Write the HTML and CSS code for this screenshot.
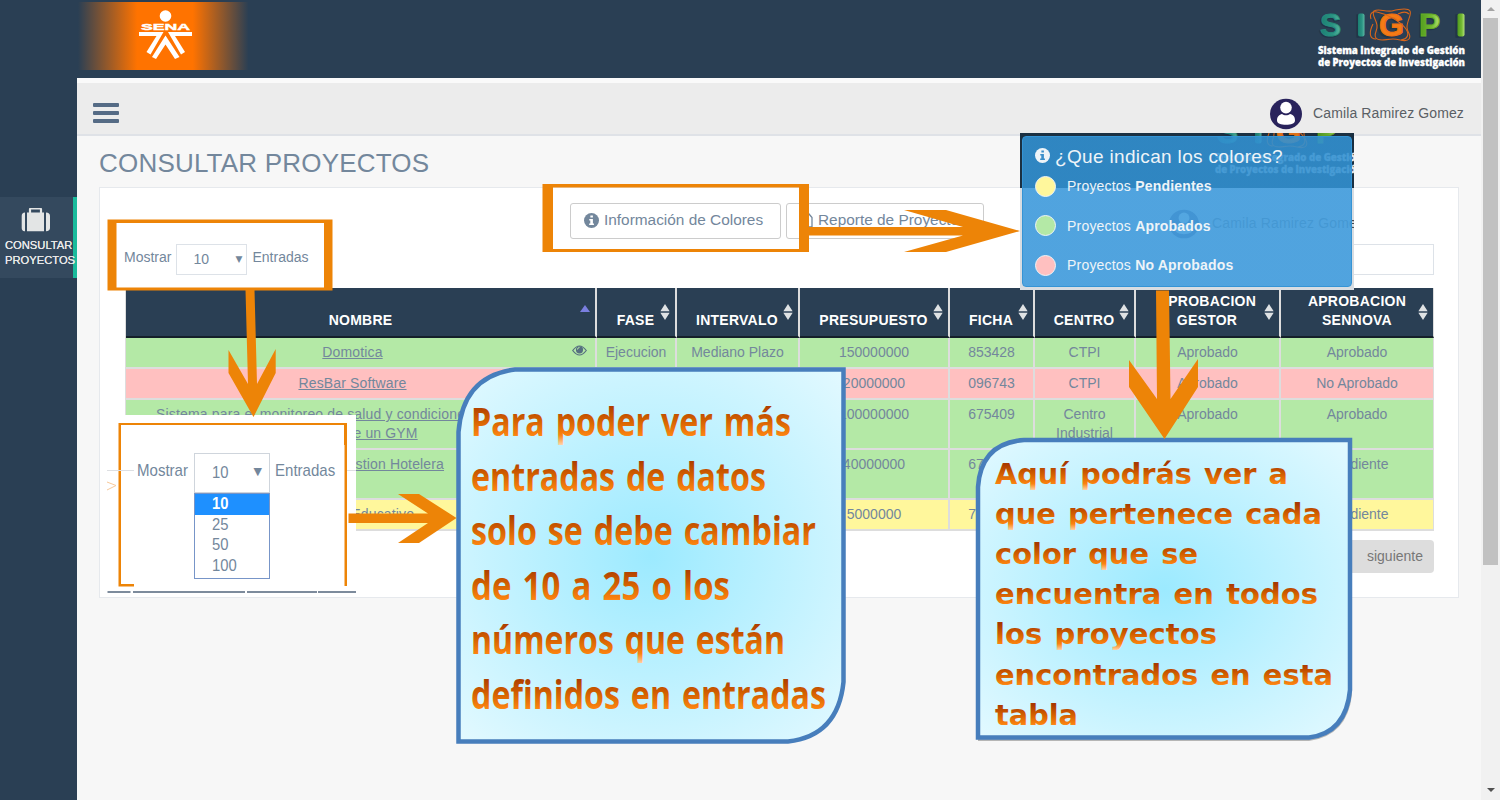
FILE: index.html
```html
<!DOCTYPE html>
<html lang="es">
<head>
<meta charset="utf-8">
<title>SIGPI - Consultar Proyectos</title>
<link rel="stylesheet" href="styles.css">
</head>
<body>
<svg class="defs" width="0" height="0" aria-hidden="true">
  <defs>
    <linearGradient id="teal" x1="0" x2="1" y1="0" y2="0"><stop offset="0" stop-color="#1b7f72"/><stop offset=".6" stop-color="#2a9483"/><stop offset="1" stop-color="#5db8a4"/></linearGradient>
    <linearGradient id="green" x1="0" x2="1" y1="0" y2="0"><stop offset="0" stop-color="#4f9a1c"/><stop offset=".6" stop-color="#74bb33"/><stop offset="1" stop-color="#b4e27a"/></linearGradient>
    <symbol id="info" viewBox="0 0 16 16"><circle cx="8" cy="8" r="8" fill="currentColor"/><path class="info-i" d="M6.800 2.600h2.700v2.300H6.800zM5.600 6.400h3.900v4.700h1.100v1.700H5.500v-1.700h1.200v-3H5.600z"/></symbol>
    <symbol id="person" viewBox="0 0 32 32"><ellipse cx="16" cy="16" rx="16" ry="15.300" fill="#29235c"/><circle cx="16" cy="9.600" r="5.800" fill="#fff"/><path d="M7 22.500c0-4 2.500-6 5-6.500 2 1.700 6 1.700 8 0 3 .5 5 2.500 5 6.500 0 3-4 4.300-9 4.300s-9-1.300-9-4.300z" fill="#fff"/></symbol>
    <symbol id="sort" viewBox="0 0 10 16"><path d="M5 0l4.500 7H.5zM5 16L.5 9h9z" fill="#dfe2e4"/><path d="M.5 7.500h9v1H.5z" fill="#8c99a5"/></symbol>
    <symbol id="sigpi" viewBox="0 0 150 70">
      <g font-family="Liberation Sans" font-weight="700" font-size="32">
        <g fill="#172c3f" stroke="#172c3f" stroke-width="1.500" opacity=".5"><text x="2" y="35">S</text><text x="38" y="35">I</text><text x="60" y="35">G</text><text x="101" y="35">P</text><text x="137" y="35">I</text></g>
        <text x="3" y="34" fill="url(#teal)" stroke="#258d7d" stroke-width=".9">S</text>
        <rect x="41" y="11.500" width="6.500" height="23" rx="2" fill="url(#teal)"/>
        <text x="62" y="34" fill="#f47b16" stroke="#ee7213" stroke-width="1.200">G</text>
        <text x="102" y="34" fill="url(#green)" stroke="#65ae26" stroke-width="1">P</text>
        <rect x="140.500" y="11.500" width="7" height="23" rx="2" fill="url(#green)"/>
      </g>
      <g fill="none" stroke="#d9661b" stroke-width="1.100"><path d="M57 9c5-3 10 1 18 0 8-2 16-3 18 0s-3 10-3 16 5 8 2 12-9 0-16 0-14 3-17-1 2-7 1-13-6-11-3-14z"/><path d="M54 17c-2-6 2-8 6-7 10 2 23 9 29 17 4 6 1 10-5 11M92 12c-3-3-7-2-11 0M56 22c-4 8-4 15 3 15"/></g>
      <g font-family="Open Sans" font-weight="800" font-size="10" fill="#fff" stroke="#fff" stroke-width=".3"><text x="1" y="52" textLength="147" lengthAdjust="spacingAndGlyphs">Sistema Integrado de Gestión</text><text x="1" y="64" textLength="147" lengthAdjust="spacingAndGlyphs">de Proyectos de Investigación</text></g>
    </symbol>
  </defs>
</svg>

<div class="page">
  <div class="app">
    <header class="topbar">
      <div class="sena">
        <svg width="56" height="54" viewBox="0 0 56 54" fill="#fff"><circle cx="27.500" cy="8" r="5.800"/><text x="3" y="22.300" font-family="Liberation Sans" font-weight="700" font-size="9.500" stroke="#fff" stroke-width=".4" textLength="49" lengthAdjust="spacingAndGlyphs">SENA</text><path d="M1 24h24.500L12.500 46.500 8.500 44 18.500 28H1zM54 24H30L43 46.500 47 44 37 28H54z"/><path d="M27.500 27.500L41.500 49 37 51 27.500 36.500 18 51 14 49z"/></svg>
      </div>
      <svg class="brand" width="150" height="70"><use href="#sigpi"/></svg>
    </header>
    <div class="body">
      <aside class="sidebar">
        <div class="side-item">
          <svg width="30" height="24" viewBox="0 0 30 24"><path d="M9 5V1.500Q9 .5 10 .5h9q1 0 1 1V5" fill="none" stroke="#e3e5e5" stroke-width="2.200"/><path d="M4 4.500v18.700H3.500Q.7 23 .7 20V8q0-3.300 3.300-3.500zM6 4.500h17v18.700H6zM25 4.500q4 .2 4 3.500v12q0 3-4 3.200z" fill="#e3e5e5"/></svg>
          <span>CONSULTAR</span><span>PROYECTOS</span>
        </div>
      </aside>
      <main class="main">
        <nav class="navbar">
          <div class="burger"><i></i><i></i><i></i></div>
          <div class="user"><svg width="32" height="32"><use href="#person"/></svg><span>Camila Ramirez Gomez</span></div>
        </nav>
        <h1>CONSULTAR PROYECTOS</h1>
        <section class="card">
          <div class="buttons">
            <button><svg width="15" height="15"><use href="#info"/></svg><span>Información de Colores</span></button>
            <button><svg width="12" height="15" viewBox="0 0 12 15" fill="none" stroke="#73879c" stroke-width="1.300"><path d="M1 14V1h7l3 3.500V14zM4 8h4M4 11h4"/></svg><span>Reporte de Proyectos</span></button>
          </div>
          <div class="controls">
            <label class="length">Mostrar <span class="select">10<b>▼</b></span> Entradas</label>
            <div class="search"></div>
          </div>
          <table>
            <colgroup><col class="c1"><col class="c2"><col class="c3"><col class="c4"><col class="c5"><col class="c6"><col class="c7"><col class="c8"></colgroup>
            <thead><tr>
              <th>NOMBRE<i class="asc"></i></th>
              <th>FASE<svg class="sort"><use href="#sort"/></svg></th>
              <th>INTERVALO<svg class="sort"><use href="#sort"/></svg></th>
              <th>PRESUPUESTO<svg class="sort"><use href="#sort"/></svg></th>
              <th>FICHA<svg class="sort"><use href="#sort"/></svg></th>
              <th>CENTRO<svg class="sort"><use href="#sort"/></svg></th>
              <th>APROBACION<br>GESTOR<svg class="sort"><use href="#sort"/></svg></th>
              <th>APROBACION<br>SENNOVA<svg class="sort"><use href="#sort"/></svg></th>
            </tr></thead>
            <tbody>
              <tr class="ok"><td class="named"><u>Domotica</u><svg class="eye" width="15" height="11" viewBox="0 0 15 11"><path d="M.7 5.500Q7.500-3.500 14.300 5.500 7.500 14.500.7 5.500z" fill="none" stroke="#566f80" stroke-width="1.200"/><circle cx="7.500" cy="4.800" r="3.600" fill="#566f80"/><path d="M5.500 4.500q0-2 2-2" fill="none" stroke="#b4e9a6"/></svg></td><td>Ejecucion</td><td>Mediano Plazo</td><td>150000000</td><td>853428</td><td>CTPI</td><td>Aprobado</td><td>Aprobado</td></tr>
              <tr class="no"><td class="named"><u>ResBar Software</u></td><td>Ejecucion</td><td>Corto Plazo</td><td>20000000</td><td>096743</td><td>CTPI</td><td>Aprobado</td><td>No Aprobado</td></tr>
              <tr class="ok tall"><td class="named"><u>Sistema para el monitoreo de salud y condiciones fisicas para<br>usuarios de un GYM</u></td><td>Ejecucion</td><td>Largo Plazo</td><td>100000000</td><td>675409</td><td>Centro Industrial</td><td>Aprobado</td><td>Aprobado</td></tr>
              <tr class="ok tall"><td class="named"><u>Sistema de Gestion Hotelera</u></td><td>Ejecucion</td><td>Corto Plazo</td><td>40000000</td><td>675410</td><td>CTPI</td><td>Aprobado</td><td>Pendiente</td></tr>
              <tr class="wait"><td class="named"><u>Software Educativo</u></td><td>Analisis</td><td>Corto Plazo</td><td>5000000</td><td>765432</td><td>CTPI</td><td>Pendiente</td><td>Pendiente</td></tr>
            </tbody>
          </table>
          <div class="pager"><span>siguiente</span></div>
        </section>
      </main>
    </div>
  </div>
  <div class="scroll"><i class="up"></i><i class="thumb"></i><i class="down"></i></div>

  <div class="dropdown-demo">
    <div class="demo-row"><span class="narrow left">Mostrar</span><div class="demo-select"><div class="shown"><em>10</em><b>▼</b></div><ul><li class="on"><em>10</em></li><li><em>25</em></li><li><em>50</em></li><li><em>100</em></li></ul></div><span class="narrow">Entradas</span></div>
  </div>

  <div class="legend">
    <svg class="ghost" width="334" height="157">
      <use href="#sigpi" x="194" y="-24" width="150" height="70" opacity=".9"/>
      <use href="#person" x="149" y="76" width="30" height="30"/>
      <text x="192" y="95" font-family="Liberation Sans" font-size="14" fill="#44494f" textLength="152">Camila Ramirez Gomez</text>
    </svg>
    <div class="legend-box">
      <h2><svg width="15" height="15"><use href="#info"/></svg><span>¿Que indican los colores?</span></h2>
      <p><i class="y"></i><span>Proyectos <b>Pendientes</b></span></p>
      <p><i class="g"></i><span>Proyectos <b>Aprobados</b></span></p>
      <p><i class="r"></i><span>Proyectos <b>No Aprobados</b></span></p>
    </div>
  </div>

  <svg class="notes" width="1500" height="800" viewBox="0 0 1500 800">
    <defs>
      <radialGradient id="sky" cx=".5" cy=".5" r=".7"><stop offset="0" stop-color="#9ceaff"/><stop offset="1" stop-color="#e2f9ff"/></radialGradient>
      <linearGradient id="ink" x1="0" x2="0" y1="0" y2="1"><stop offset=".18" stop-color="#a83800"/><stop offset=".5" stop-color="#d46000"/><stop offset=".78" stop-color="#fb8310"/><stop offset="1" stop-color="#ffe0c0"/></linearGradient>
    </defs>
    <!-- second callout -->
    <path d="M978 690V741H1309Q1347 736 1352 695V440H1340V690z" fill="#8a8a88" opacity=".6"/>
    <path d="M1024 440H1350V690Q1346 733 1309 737.500H978V487Q981 443 1024 440z" fill="url(#sky)" stroke="#477ebc" stroke-width="4.500"/>
    <g class="second">
      <text x="995" y="484" textLength="293" lengthAdjust="spacingAndGlyphs">Aquí podrás ver a</text>
      <text x="995" y="524" textLength="327" lengthAdjust="spacingAndGlyphs">que pertenece cada</text>
      <text x="995" y="564" textLength="203" lengthAdjust="spacingAndGlyphs">color que se</text>
      <text x="995" y="604" textLength="323" lengthAdjust="spacingAndGlyphs">encuentra en todos</text>
      <text x="995" y="644" textLength="222" lengthAdjust="spacingAndGlyphs">los proyectos</text>
      <text x="995" y="684.500" textLength="338" lengthAdjust="spacingAndGlyphs">encontrados en esta</text>
      <text x="995" y="724.500" textLength="83" lengthAdjust="spacingAndGlyphs">tabla</text>
    </g>
    <!-- first callout -->
    <path d="M515 369.500H843.500V682Q838 736 788 741.500H458.500V432Q463 376 515 369.500z" fill="url(#sky)" stroke="#477ebc" stroke-width="4.500"/>
    <g class="first">
      <text x="471" y="435.500" textLength="320" lengthAdjust="spacingAndGlyphs">Para poder ver más</text>
      <text x="471" y="490.500" textLength="295" lengthAdjust="spacingAndGlyphs">entradas de datos</text>
      <text x="471" y="545" textLength="345" lengthAdjust="spacingAndGlyphs">solo se debe cambiar</text>
      <text x="471" y="599.500" textLength="259" lengthAdjust="spacingAndGlyphs">de 10 a 25 o los</text>
      <text x="471" y="654" textLength="314" lengthAdjust="spacingAndGlyphs">números que están</text>
      <text x="471" y="708.500" textLength="355" lengthAdjust="spacingAndGlyphs">definidos en entradas</text>
    </g>
    <!-- frames and arrows -->
    <g fill="#ed8407">
      <path fill-rule="evenodd" d="M107.500 219.500h225v71h-225zM116.500 223v64.500H324V223z"/>
      <path fill-rule="evenodd" d="M542.500 184h266.500v68H542.500zM553 187.500V249h246v-61.500z"/>
      <path d="M809 227H963L904 210H946L1020 231 946 252H904L963 235.500H809z"/>
      <path d="M245.500 290H254.500L257 384 275.700 349V373L253.500 417 228.500 373V350L248 384z"/>
      <path d="M1156 290.500H1169L1170.500 399 1198 359V387L1164.500 439 1129 387V360L1157 399z"/>
      <path d="M348.500 513.500H428L398 494H419L456.500 518 419 543H398L428 523H348.500z"/>
      <path d="M118.500 423H347V586h-2.500V445H344V425H121V584h13v2.500h-15.500z"/>
    </g>
    <path d="M107 470.500h27M347 470.500h9" stroke="#dddfe2" stroke-width="1"/>
    <path d="M107 482l9 3.500-9 4.500" fill="none" stroke="#f8c99a"/>
    <path d="M107.500 592h23M133 592h112M247 592h70M318 592h38" stroke="#53667c" stroke-width="1.500"/>
  </svg>
</div>
</body>
</html>
```

FILE: styles.css
```css
* { box-sizing: border-box; }
body { margin: 0; background: #f7f7f7; font-family: "Liberation Sans", Arial, sans-serif; font-size: 14px; color: #73879c; }
.page { position: relative; display: flex; width: 1500px; height: 800px; overflow: hidden; }
.defs { position: absolute; }
.app { width: 1481px; display: flex; flex-direction: column; }
.topbar { height: 78px; background: #2a3f54; display: flex; justify-content: space-between; padding: 2px 14px 0 78px; }
.sena { width: 174px; height: 68px; background: linear-gradient(90deg, rgba(255,115,0,0), #ff7300 34%, #ff7300 66%, rgba(255,115,0,0) 98%); padding: 6px 0 0 60px; }
.brand { display: block; }
.body { flex: 1; display: flex; }
.sidebar { width: 77px; background: #2a3f54; padding-top: 119px; }
.side-item { height: 81px; background: #34495e; border-right: 4px solid #1abb9c; display: flex; flex-direction: column; align-items: center; padding-top: 11px; font-size: 11.2px; line-height: 14.500px; color: #e7e7e7; }
.side-item svg { margin-bottom: 6px; margin-right: 1px; }
.side-item span { width: 68px; margin-left: 5px; white-space: nowrap; text-shadow: 0 0 .5px #fff; }
.info-i { fill: var(--mark, #fff); }
.main { flex: 1; background: #f7f7f7; min-width: 0; }
.navbar { height: 58px; border-top: 5px solid #fafafa; border-bottom: 2px solid #dfe2e7; background: #ececec; display: flex; justify-content: space-between; padding: 0 17px 0 16px; }
.burger { display: flex; flex-direction: column; gap: 4px; padding-top: 20px; }
.burger i { width: 26px; height: 4px; background: #556b85; border-radius: 1px; }
.user { display: flex; gap: 11px; padding-top: 15px; color: #5a5f65; }
.user span { font-size: 14px; line-height: 30px; letter-spacing: .12px; width: 151px; white-space: nowrap; }
h1 { margin: 0 0 0 22px; padding-top: 11px; height: 51px; font-weight: 400; font-size: 26px; line-height: 32px; letter-spacing: .2px; }
.card { margin: 0 22px; height: 411px; background: #fff; border: 1px solid #e6e9ed; padding: 15px 25px 0; }
.buttons { display: flex; gap: 5px; margin-left: 445px; }
button { height: 36px; border: 1px solid #ccc; border-radius: 3px; background: #fff; color: #73879c; font: 15.400px "Liberation Sans", sans-serif; padding: 0 0 2px 13px; display: flex; align-items: center; gap: 5px; white-space: nowrap; }
button:first-child { width: 211px; }
button:last-child { width: 198px; padding-left: 14px; }
.controls { display: flex; justify-content: space-between; height: 49px; padding-top: 4px; }
.length { display: flex; gap: 5px; line-height: 29px; margin-left: -1px; }
.select { width: 71px; height: 31px; border: 1px solid #dde2e8; margin-top: 1px; padding-left: 16px; display: flex; justify-content: space-between; padding-right: 4px; }
.select b { font: 9px/29px "DejaVu Sans"; }
.search { width: 180px; height: 31px; margin-top: 1px; margin-right: -1px; border: 1px solid #dde2e8; }
table { width: 1308px; margin-left: 1px; table-layout: fixed; border-collapse: separate; border-spacing: 0; text-align: center; line-height: 19px; box-shadow: -1px 0 #ddd; }
.c1 { width: 471px; } .c2 { width: 80px; } .c3 { width: 123px; } .c4 { width: 150px; }
.c5 { width: 85px; } .c6 { width: 101px; } .c7 { width: 145px; } .c8 { width: 153px; }
th { height: 50px; padding: 0 1px 6px 0; vertical-align: bottom; background: #2a3f54; color: #fff; font-size: 14px; letter-spacing: .25px; border-right: 2px solid #ddd; border-bottom: 2px solid #15202a; position: relative; }
th:first-child { padding-right: 0; }
th:last-child { padding-right: 0; border-right: 1px solid #ddd; }
.sort { position: absolute; right: 5px; top: 16px; width: 10px; height: 16px; }
.asc { position: absolute; right: 5px; top: 17px; border: 5px solid transparent; border-top: 0; border-bottom: 7px solid #7a7fe0; }
td { height: 31px; padding: 5px 2px 0; vertical-align: top; border-right: 2px solid #ddd; border-bottom: 2px solid #ddd; position: relative; }
td:last-child { border-right-width: 1px; }
.named { padding-right: 18px; letter-spacing: .15px; }
.tall td { height: 50px; }
.eye { position: absolute; right: 8px; top: 7px; }
.ok { background: #b4e9a6; }
.no { background: #ffc0c0; }
.wait { background: #fff79c; }
.pager { display: flex; justify-content: flex-end; padding-top: 9px; margin-right: -1px; }
.pager span { width: 120px; height: 33px; line-height: 32px; padding-right: 11px; text-align: right; background: #ddd; border-radius: 4px; color: #777; }
.scroll { width: 19px; background: #f1f1f1; display: flex; flex-direction: column; align-items: center; }
.up { margin: 7px 0; border: 4px solid transparent; border-top: 0; border-bottom: 4px solid #a3a3a3; }
.thumb { width: 15px; height: 547px; background: #c1c1c1; }
.down { margin-top: 223px; border: 4px solid transparent; border-bottom: 0; border-top: 4px solid #505050; }
.dropdown-demo { position: absolute; left: 106px; top: 415px; width: 250px; height: 178px; background: #fff; padding-top: 38px; }
.demo-row { display: flex; padding-left: 31px; }
.narrow { font-size: 17px; line-height: 36px; width: 61px; white-space: nowrap; transform: scaleX(.885); transform-origin: 0 0; }
.narrow.left { width: 57px; }
.demo-select { width: 76px; margin-right: 5px; font-size: 17px; }
.demo-select em { display: inline-block; font-style: normal; transform: scaleX(.87); transform-origin: 0 50%; }
.shown { height: 40px; border: 1px solid #cfd5dc; padding: 0 7px 0 17px; line-height: 38px; display: flex; justify-content: space-between; }
.shown b { font: 11px/36px "DejaVu Sans"; }
ul { list-style: none; margin: 0; padding: 0 0 2px; border: 1px solid #7795c8; height: 86px; line-height: 20.500px; }
li { padding-left: 17px; }
.on { background: #1e90ff; color: #fff; font-weight: 700; }
.legend { position: absolute; left: 1020px; top: 133px; width: 334px; height: 157px; padding: 3px 2px; background: linear-gradient(#1b3042 55px, #d8dde2 55px); overflow: hidden; }
.ghost { position: absolute; left: 0; top: 0; }
.legend-box { --mark: #3b8fca; position: relative; height: 151px; border-radius: 4px; border: 1px solid #3594d5; background: linear-gradient(rgba(50,145,210,.84) 51px, rgba(68,158,222,.84) 51px), linear-gradient(rgba(50,141,203,.3) 51px, rgba(74,162,223,.5) 51px); padding: 8px 12px; color: #eef4f8; }
h2 { margin: 0 0 6px; font-weight: 400; font-size: 19px; line-height: 24px; letter-spacing: .33px; display: flex; gap: 5px; white-space: nowrap; }
h2 svg { margin-top: 3px; }
.legend-box p { margin: 0 0 17.500px; height: 22px; display: flex; align-items: center; gap: 11px; }
.legend-box p span { font-size: 14px; letter-spacing: .2px; white-space: nowrap; }
.legend-box p i { width: 21px; height: 21px; border-radius: 50%; border: 1px solid; }
.y { background: #fff79c; border-color: #e8b13b; }
.g { background: #b4e9a6; border-color: #2ec28d; }
.r { background: #ffc0c0; border-color: #dc605c; }
.notes { position: absolute; left: 0; top: 0; }
.first text, .second text { fill: url(#ink); font-family: "DejaVu Sans", sans-serif; font-weight: 700; }
.first text { font-family: "Open Sans", sans-serif; font-size: 38.500px; word-spacing: 3px; }
.second text { font-size: 28px; word-spacing: 2px; }
```
